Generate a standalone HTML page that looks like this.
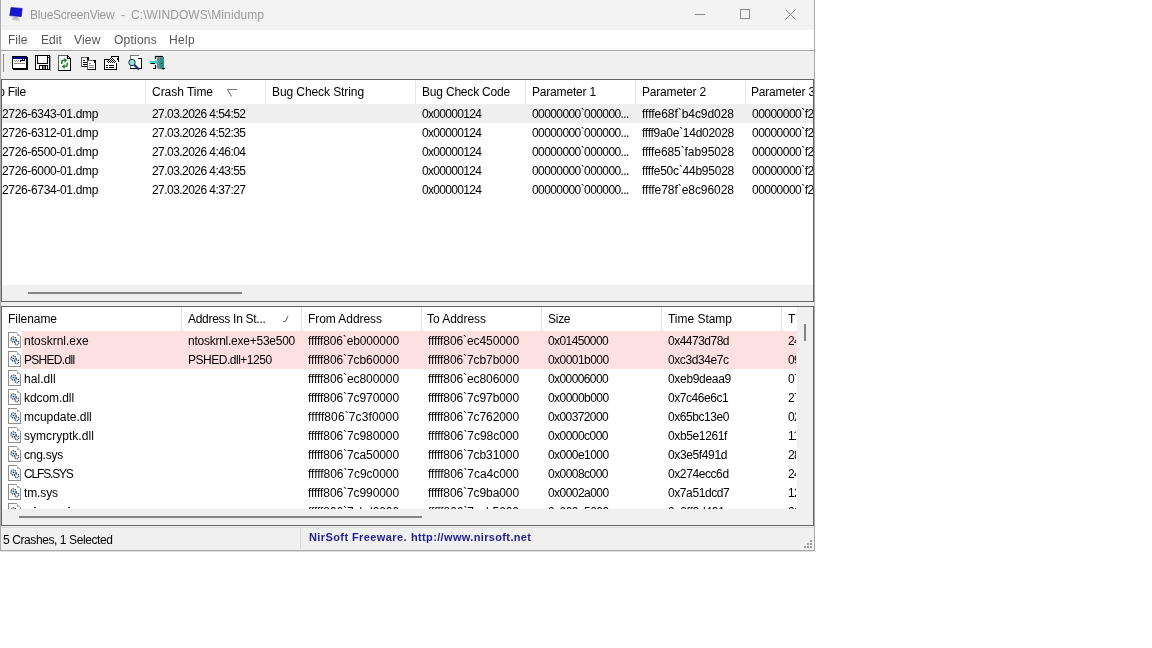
<!DOCTYPE html>
<html><head><meta charset="utf-8">
<style>
html,body{margin:0;padding:0;background:#fff;width:1152px;height:648px;overflow:hidden;position:relative}
*{box-sizing:border-box}
.a{position:absolute}
.t{position:absolute;white-space:pre;will-change:transform;font-family:"Liberation Sans",sans-serif;font-size:12px;line-height:14px;color:#000}
.clip{position:absolute;left:0;top:0;width:1152px;height:648px}
</style></head><body>
<!-- window frame -->
<div class="a" style="left:0;top:0;width:815px;height:551px;background:#f0f0f0;border-left:1px solid #aaa;border-right:1px solid #aaa;border-bottom:1px solid #aaa"></div>
<div class="a" style="left:0;top:551px;width:816px;height:1px;background:#dedede"></div>
<!-- title bar -->
<div class="a" style="left:1px;top:0;width:813px;height:30px;background:#f3f3f3"></div>
<div class="a" style="left:1px;top:25px;width:813px;height:2px;background:#f0f0f0"></div>
<!-- menu -->
<div class="a" style="left:1px;top:30px;width:813px;height:20px;background:#fff"></div>
<div class="a" style="left:1px;top:48px;width:813px;height:1px;background:#f4f4f4"></div>
<div class="a" style="left:1px;top:50px;width:813px;height:1px;background:#a0a0a0"></div>
<div class="a" style="left:1px;top:51px;width:813px;height:1px;background:#fafafa"></div>
<!-- toolbar separator -->
<div class="a" style="left:3px;top:54px;width:1px;height:18px;background:#8a8a8a"></div>
<!-- title buttons -->
<svg class="a" style="left:680px;top:0" width="130" height="30" viewBox="680 0 130 30">
<path d="M695 14.5H705" stroke="#8a8a8a" stroke-width="1" fill="none"/>
<rect x="740.5" y="9.5" width="9" height="9" stroke="#8a8a8a" stroke-width="1" fill="none"/>
<path d="M785.5 9.5L795.5 19.5M795.5 9.5L785.5 19.5" stroke="#8a8a8a" stroke-width="1" fill="none"/>
</svg>
<!-- title icon -->
<svg class="a" style="left:0;top:0" width="30" height="30" viewBox="0 0 30 30">
<path d="M11 7.6L22.2 8.4L21.2 16.6L9.8 15.6Z" fill="#1414d4" stroke="#10108a" stroke-width="0.7"/>
<path d="M12.5 17L18.5 17.5L20 20.5L12 20Z" fill="#c4c4d0"/>
<path d="M14 17.2L17 17.4" stroke="#8888a8" stroke-width="0.8"/>
</svg>

<!-- TOP LIST -->
<div class="a" style="left:1px;top:79px;width:813px;height:223px;border:1px solid #646464;background:#fff"></div>
<div class="a" style="left:2px;top:104px;width:811px;height:19px;background:#efefef"></div>
<div class="a" style="left:145px;top:80px;width:1px;height:24px;background:#e5e5e5"></div>
<div class="a" style="left:265px;top:80px;width:1px;height:24px;background:#e5e5e5"></div>
<div class="a" style="left:415px;top:80px;width:1px;height:24px;background:#e5e5e5"></div>
<div class="a" style="left:525px;top:80px;width:1px;height:24px;background:#e5e5e5"></div>
<div class="a" style="left:635px;top:80px;width:1px;height:24px;background:#e5e5e5"></div>
<div class="a" style="left:745px;top:80px;width:1px;height:24px;background:#e5e5e5"></div>
<svg class="a" style="left:226px;top:87px" width="12" height="11" viewBox="0 0 12 11"><path d="M1.2 2.5H11M1.8 3L5.5 9.5" stroke="#777" stroke-width="1.1" fill="none"/></svg>
<div class="clip" style="clip-path:inset(80px 339px 363px 2px)">
<span class="t" style="left:-25.65px;top:85px;letter-spacing:-0.326px">Dump File</span>
<span class="t" style="left:151.90px;top:85px;letter-spacing:-0.036px">Crash Time</span>
<span class="t" style="left:271.80px;top:85px;letter-spacing:-0.087px">Bug Check String</span>
<span class="t" style="left:421.80px;top:85px;letter-spacing:-0.195px">Bug Check Code</span>
<span class="t" style="left:531.60px;top:85px;letter-spacing:-0.185px">Parameter 1</span>
<span class="t" style="left:641.50px;top:85px;letter-spacing:-0.185px">Parameter 2</span>
<span class="t" style="left:751.40px;top:85px;letter-spacing:-0.185px">Parameter 3</span>
<span class="t" style="left:1.60px;top:107px;letter-spacing:-0.339px">2726-6343-01.dmp</span>
<span class="t" style="left:151.90px;top:107px;letter-spacing:-0.552px">27.03.2026 4:54:52</span>
<span class="t" style="left:421.80px;top:107px;letter-spacing:-0.678px">0x00000124</span>
<span class="t" style="left:531.60px;top:107px;letter-spacing:-0.591px">00000000`000000...</span>
<span class="t" style="left:641.60px;top:107px;letter-spacing:-0.045px">ffffe68f`b4c9d028</span>
<span class="t" style="left:751.60px;top:107px;letter-spacing:-0.518px">00000000`f2cd0000</span>
<span class="t" style="left:1.60px;top:126px;letter-spacing:-0.339px">2726-6312-01.dmp</span>
<span class="t" style="left:151.90px;top:126px;letter-spacing:-0.552px">27.03.2026 4:52:35</span>
<span class="t" style="left:421.80px;top:126px;letter-spacing:-0.678px">0x00000124</span>
<span class="t" style="left:531.60px;top:126px;letter-spacing:-0.591px">00000000`000000...</span>
<span class="t" style="left:641.60px;top:126px;letter-spacing:-0.281px">ffff9a0e`14d02028</span>
<span class="t" style="left:751.60px;top:126px;letter-spacing:-0.518px">00000000`f2cd0000</span>
<span class="t" style="left:1.60px;top:145px;letter-spacing:-0.339px">2726-6500-01.dmp</span>
<span class="t" style="left:151.90px;top:145px;letter-spacing:-0.552px">27.03.2026 4:46:04</span>
<span class="t" style="left:421.80px;top:145px;letter-spacing:-0.678px">0x00000124</span>
<span class="t" style="left:531.60px;top:145px;letter-spacing:-0.591px">00000000`000000...</span>
<span class="t" style="left:641.60px;top:145px;letter-spacing:-0.085px">ffffe685`fab95028</span>
<span class="t" style="left:751.60px;top:145px;letter-spacing:-0.518px">00000000`f2cd0000</span>
<span class="t" style="left:1.60px;top:164px;letter-spacing:-0.339px">2726-6000-01.dmp</span>
<span class="t" style="left:151.90px;top:164px;letter-spacing:-0.552px">27.03.2026 4:43:55</span>
<span class="t" style="left:421.80px;top:164px;letter-spacing:-0.678px">0x00000124</span>
<span class="t" style="left:531.60px;top:164px;letter-spacing:-0.591px">00000000`000000...</span>
<span class="t" style="left:641.60px;top:164px;letter-spacing:-0.241px">ffffe50c`44b95028</span>
<span class="t" style="left:751.60px;top:164px;letter-spacing:-0.518px">00000000`f2cd0000</span>
<span class="t" style="left:1.60px;top:183px;letter-spacing:-0.339px">2726-6734-01.dmp</span>
<span class="t" style="left:151.90px;top:183px;letter-spacing:-0.552px">27.03.2026 4:37:27</span>
<span class="t" style="left:421.80px;top:183px;letter-spacing:-0.678px">0x00000124</span>
<span class="t" style="left:531.60px;top:183px;letter-spacing:-0.591px">00000000`000000...</span>
<span class="t" style="left:641.60px;top:183px;letter-spacing:-0.045px">ffffe78f`e8c96028</span>
<span class="t" style="left:751.60px;top:183px;letter-spacing:-0.518px">00000000`f2cd0000</span>
</div>
<div class="a" style="left:2px;top:285px;width:811px;height:16px;background:#f0f0f0"></div>
<div class="a" style="left:28px;top:292px;width:214px;height:2px;background:#858585"></div>

<!-- BOTTOM LIST -->
<div class="a" style="left:1px;top:306px;width:813px;height:220px;border:1px solid #646464;background:#fff"></div>
<div class="a" style="left:22px;top:331px;width:775px;height:38px;background:#fde0e0"></div>
<div class="a" style="left:181px;top:307px;width:1px;height:24px;background:#e5e5e5"></div>
<div class="a" style="left:301px;top:307px;width:1px;height:24px;background:#e5e5e5"></div>
<div class="a" style="left:421px;top:307px;width:1px;height:24px;background:#e5e5e5"></div>
<div class="a" style="left:541px;top:307px;width:1px;height:24px;background:#e5e5e5"></div>
<div class="a" style="left:661px;top:307px;width:1px;height:24px;background:#e5e5e5"></div>
<div class="a" style="left:781px;top:307px;width:1px;height:24px;background:#e5e5e5"></div>
<svg class="a" style="left:281px;top:313px" width="10" height="10" viewBox="0 0 10 10"><path d="M2 8.5H4.5L7 3" stroke="#777" stroke-width="1.1" fill="none"/></svg>
<div class="clip" style="clip-path:inset(307px 356px 139px 2px)">
<svg class="a" style="left:8px;top:332px" width="14" height="17" viewBox="0 0 14 17"><g shape-rendering="crispEdges"><path d="M0 0H9V1H0ZM0 0H1V16H0ZM0 15H13V16H0ZM12 4H13V16H12Z" fill="#8f8f8f"/><rect x="1" y="1" width="8" height="14" fill="#fff"/><rect x="9" y="4" width="3" height="11" fill="#fff"/><path d="M9 1H10V2H11V3H12V4H9Z" fill="#b5b5b5"/></g>
<circle cx="5.5" cy="7.5" r="2.6" fill="#d6e6f2" stroke="#2c3a4c" stroke-width="1.2" stroke-dasharray="1.3 0.9"/>
<circle cx="5.5" cy="7.5" r="0.8" fill="#2c3a4c"/>
<circle cx="8.8" cy="10.8" r="2" fill="#e6f0f6" stroke="#2c3a4c" stroke-width="1.2" stroke-dasharray="1.1 0.8"/>
</svg><svg class="a" style="left:8px;top:351px" width="14" height="17" viewBox="0 0 14 17"><g shape-rendering="crispEdges"><path d="M0 0H9V1H0ZM0 0H1V16H0ZM0 15H13V16H0ZM12 4H13V16H12Z" fill="#8f8f8f"/><rect x="1" y="1" width="8" height="14" fill="#fff"/><rect x="9" y="4" width="3" height="11" fill="#fff"/><path d="M9 1H10V2H11V3H12V4H9Z" fill="#b5b5b5"/></g>
<circle cx="5.5" cy="7.5" r="2.6" fill="#d6e6f2" stroke="#2c3a4c" stroke-width="1.2" stroke-dasharray="1.3 0.9"/>
<circle cx="5.5" cy="7.5" r="0.8" fill="#2c3a4c"/>
<circle cx="8.8" cy="10.8" r="2" fill="#e6f0f6" stroke="#2c3a4c" stroke-width="1.2" stroke-dasharray="1.1 0.8"/>
</svg><svg class="a" style="left:8px;top:370px" width="14" height="17" viewBox="0 0 14 17"><g shape-rendering="crispEdges"><path d="M0 0H9V1H0ZM0 0H1V16H0ZM0 15H13V16H0ZM12 4H13V16H12Z" fill="#8f8f8f"/><rect x="1" y="1" width="8" height="14" fill="#fff"/><rect x="9" y="4" width="3" height="11" fill="#fff"/><path d="M9 1H10V2H11V3H12V4H9Z" fill="#b5b5b5"/></g>
<circle cx="5.5" cy="7.5" r="2.6" fill="#d6e6f2" stroke="#2c3a4c" stroke-width="1.2" stroke-dasharray="1.3 0.9"/>
<circle cx="5.5" cy="7.5" r="0.8" fill="#2c3a4c"/>
<circle cx="8.8" cy="10.8" r="2" fill="#e6f0f6" stroke="#2c3a4c" stroke-width="1.2" stroke-dasharray="1.1 0.8"/>
</svg><svg class="a" style="left:8px;top:389px" width="14" height="17" viewBox="0 0 14 17"><g shape-rendering="crispEdges"><path d="M0 0H9V1H0ZM0 0H1V16H0ZM0 15H13V16H0ZM12 4H13V16H12Z" fill="#8f8f8f"/><rect x="1" y="1" width="8" height="14" fill="#fff"/><rect x="9" y="4" width="3" height="11" fill="#fff"/><path d="M9 1H10V2H11V3H12V4H9Z" fill="#b5b5b5"/></g>
<circle cx="5.5" cy="7.5" r="2.6" fill="#d6e6f2" stroke="#2c3a4c" stroke-width="1.2" stroke-dasharray="1.3 0.9"/>
<circle cx="5.5" cy="7.5" r="0.8" fill="#2c3a4c"/>
<circle cx="8.8" cy="10.8" r="2" fill="#e6f0f6" stroke="#2c3a4c" stroke-width="1.2" stroke-dasharray="1.1 0.8"/>
</svg><svg class="a" style="left:8px;top:408px" width="14" height="17" viewBox="0 0 14 17"><g shape-rendering="crispEdges"><path d="M0 0H9V1H0ZM0 0H1V16H0ZM0 15H13V16H0ZM12 4H13V16H12Z" fill="#8f8f8f"/><rect x="1" y="1" width="8" height="14" fill="#fff"/><rect x="9" y="4" width="3" height="11" fill="#fff"/><path d="M9 1H10V2H11V3H12V4H9Z" fill="#b5b5b5"/></g>
<circle cx="5.5" cy="7.5" r="2.6" fill="#d6e6f2" stroke="#2c3a4c" stroke-width="1.2" stroke-dasharray="1.3 0.9"/>
<circle cx="5.5" cy="7.5" r="0.8" fill="#2c3a4c"/>
<circle cx="8.8" cy="10.8" r="2" fill="#e6f0f6" stroke="#2c3a4c" stroke-width="1.2" stroke-dasharray="1.1 0.8"/>
</svg><svg class="a" style="left:8px;top:427px" width="14" height="17" viewBox="0 0 14 17"><g shape-rendering="crispEdges"><path d="M0 0H9V1H0ZM0 0H1V16H0ZM0 15H13V16H0ZM12 4H13V16H12Z" fill="#8f8f8f"/><rect x="1" y="1" width="8" height="14" fill="#fff"/><rect x="9" y="4" width="3" height="11" fill="#fff"/><path d="M9 1H10V2H11V3H12V4H9Z" fill="#b5b5b5"/></g>
<circle cx="5.5" cy="7.5" r="2.6" fill="#d6e6f2" stroke="#2c3a4c" stroke-width="1.2" stroke-dasharray="1.3 0.9"/>
<circle cx="5.5" cy="7.5" r="0.8" fill="#2c3a4c"/>
<circle cx="8.8" cy="10.8" r="2" fill="#e6f0f6" stroke="#2c3a4c" stroke-width="1.2" stroke-dasharray="1.1 0.8"/>
</svg><svg class="a" style="left:8px;top:446px" width="14" height="17" viewBox="0 0 14 17"><g shape-rendering="crispEdges"><path d="M0 0H9V1H0ZM0 0H1V16H0ZM0 15H13V16H0ZM12 4H13V16H12Z" fill="#8f8f8f"/><rect x="1" y="1" width="8" height="14" fill="#fff"/><rect x="9" y="4" width="3" height="11" fill="#fff"/><path d="M9 1H10V2H11V3H12V4H9Z" fill="#b5b5b5"/></g>
<circle cx="5.5" cy="7.5" r="2.6" fill="#d6e6f2" stroke="#2c3a4c" stroke-width="1.2" stroke-dasharray="1.3 0.9"/>
<circle cx="5.5" cy="7.5" r="0.8" fill="#2c3a4c"/>
<circle cx="8.8" cy="10.8" r="2" fill="#e6f0f6" stroke="#2c3a4c" stroke-width="1.2" stroke-dasharray="1.1 0.8"/>
</svg><svg class="a" style="left:8px;top:465px" width="14" height="17" viewBox="0 0 14 17"><g shape-rendering="crispEdges"><path d="M0 0H9V1H0ZM0 0H1V16H0ZM0 15H13V16H0ZM12 4H13V16H12Z" fill="#8f8f8f"/><rect x="1" y="1" width="8" height="14" fill="#fff"/><rect x="9" y="4" width="3" height="11" fill="#fff"/><path d="M9 1H10V2H11V3H12V4H9Z" fill="#b5b5b5"/></g>
<circle cx="5.5" cy="7.5" r="2.6" fill="#d6e6f2" stroke="#2c3a4c" stroke-width="1.2" stroke-dasharray="1.3 0.9"/>
<circle cx="5.5" cy="7.5" r="0.8" fill="#2c3a4c"/>
<circle cx="8.8" cy="10.8" r="2" fill="#e6f0f6" stroke="#2c3a4c" stroke-width="1.2" stroke-dasharray="1.1 0.8"/>
</svg><svg class="a" style="left:8px;top:484px" width="14" height="17" viewBox="0 0 14 17"><g shape-rendering="crispEdges"><path d="M0 0H9V1H0ZM0 0H1V16H0ZM0 15H13V16H0ZM12 4H13V16H12Z" fill="#8f8f8f"/><rect x="1" y="1" width="8" height="14" fill="#fff"/><rect x="9" y="4" width="3" height="11" fill="#fff"/><path d="M9 1H10V2H11V3H12V4H9Z" fill="#b5b5b5"/></g>
<circle cx="5.5" cy="7.5" r="2.6" fill="#d6e6f2" stroke="#2c3a4c" stroke-width="1.2" stroke-dasharray="1.3 0.9"/>
<circle cx="5.5" cy="7.5" r="0.8" fill="#2c3a4c"/>
<circle cx="8.8" cy="10.8" r="2" fill="#e6f0f6" stroke="#2c3a4c" stroke-width="1.2" stroke-dasharray="1.1 0.8"/>
</svg><svg class="a" style="left:8px;top:503px" width="14" height="17" viewBox="0 0 14 17"><g shape-rendering="crispEdges"><path d="M0 0H9V1H0ZM0 0H1V16H0ZM0 15H13V16H0ZM12 4H13V16H12Z" fill="#8f8f8f"/><rect x="1" y="1" width="8" height="14" fill="#fff"/><rect x="9" y="4" width="3" height="11" fill="#fff"/><path d="M9 1H10V2H11V3H12V4H9Z" fill="#b5b5b5"/></g>
<circle cx="5.5" cy="7.5" r="2.6" fill="#d6e6f2" stroke="#2c3a4c" stroke-width="1.2" stroke-dasharray="1.3 0.9"/>
<circle cx="5.5" cy="7.5" r="0.8" fill="#2c3a4c"/>
<circle cx="8.8" cy="10.8" r="2" fill="#e6f0f6" stroke="#2c3a4c" stroke-width="1.2" stroke-dasharray="1.1 0.8"/>
</svg>
<span class="t" style="left:7.80px;top:312px;letter-spacing:-0.045px">Filename</span>
<span class="t" style="left:188.30px;top:312px;letter-spacing:-0.284px">Address In St...</span>
<span class="t" style="left:307.80px;top:312px;letter-spacing:-0.059px">From Address</span>
<span class="t" style="left:427.30px;top:312px;letter-spacing:-0.037px">To Address</span>
<span class="t" style="left:547.90px;top:312px;letter-spacing:-0.265px">Size</span>
<span class="t" style="left:667.80px;top:312px;letter-spacing:-0.025px">Time Stamp</span>
<span class="t" style="left:788.30px;top:312px;letter-spacing:-1.182px">T</span>
<span class="t" style="left:24.00px;top:334px;letter-spacing:0.001px">ntoskrnl.exe</span>
<span class="t" style="left:188.30px;top:334px;letter-spacing:-0.250px">ntoskrnl.exe+53e500</span>
<span class="t" style="left:307.80px;top:334px;letter-spacing:-0.131px">fffff806`eb000000</span>
<span class="t" style="left:427.80px;top:334px;letter-spacing:-0.091px">fffff806`ec450000</span>
<span class="t" style="left:547.90px;top:334px;letter-spacing:-0.596px">0x01450000</span>
<span class="t" style="left:667.80px;top:334px;letter-spacing:-0.503px">0x4473d78d</span>
<span class="t" style="left:787.80px;top:334px;letter-spacing:-0.650px">24.05.2006</span>
<span class="t" style="left:24.00px;top:353px;letter-spacing:-0.704px">PSHED.dll</span>
<span class="t" style="left:188.30px;top:353px;letter-spacing:-0.485px">PSHED.dll+1250</span>
<span class="t" style="left:307.80px;top:353px;letter-spacing:-0.091px">fffff806`7cb60000</span>
<span class="t" style="left:427.80px;top:353px;letter-spacing:-0.091px">fffff806`7cb7b000</span>
<span class="t" style="left:547.90px;top:353px;letter-spacing:-0.550px">0x0001b000</span>
<span class="t" style="left:667.80px;top:353px;letter-spacing:-0.406px">0xc3d34e7c</span>
<span class="t" style="left:787.80px;top:353px;letter-spacing:-0.650px">09.01.2074</span>
<span class="t" style="left:24.00px;top:372px;letter-spacing:0.064px">hal.dll</span>
<span class="t" style="left:307.80px;top:372px;letter-spacing:-0.091px">fffff806`ec800000</span>
<span class="t" style="left:427.80px;top:372px;letter-spacing:-0.091px">fffff806`ec806000</span>
<span class="t" style="left:547.90px;top:372px;letter-spacing:-0.596px">0x00006000</span>
<span class="t" style="left:667.80px;top:372px;letter-spacing:-0.319px">0xeb9deaa9</span>
<span class="t" style="left:787.80px;top:372px;letter-spacing:-0.650px">07.03.2095</span>
<span class="t" style="left:24.00px;top:391px;letter-spacing:-0.078px">kdcom.dll</span>
<span class="t" style="left:307.80px;top:391px;letter-spacing:-0.091px">fffff806`7c970000</span>
<span class="t" style="left:427.80px;top:391px;letter-spacing:-0.091px">fffff806`7c97b000</span>
<span class="t" style="left:547.90px;top:391px;letter-spacing:-0.550px">0x0000b000</span>
<span class="t" style="left:667.80px;top:391px;letter-spacing:-0.453px">0x7c46e6c1</span>
<span class="t" style="left:787.80px;top:391px;letter-spacing:-0.650px">27.02.2036</span>
<span class="t" style="left:24.00px;top:410px;letter-spacing:-0.033px">mcupdate.dll</span>
<span class="t" style="left:307.80px;top:410px;letter-spacing:0.106px">fffff806`7c3f0000</span>
<span class="t" style="left:427.80px;top:410px;letter-spacing:-0.091px">fffff806`7c762000</span>
<span class="t" style="left:547.90px;top:410px;letter-spacing:-0.596px">0x00372000</span>
<span class="t" style="left:667.80px;top:410px;letter-spacing:-0.454px">0x65bc13e0</span>
<span class="t" style="left:787.80px;top:410px;letter-spacing:-0.650px">02.02.2024</span>
<span class="t" style="left:24.00px;top:429px;letter-spacing:0.040px">symcryptk.dll</span>
<span class="t" style="left:307.80px;top:429px;letter-spacing:-0.091px">fffff806`7c980000</span>
<span class="t" style="left:427.80px;top:429px;letter-spacing:-0.051px">fffff806`7c98c000</span>
<span class="t" style="left:547.90px;top:429px;letter-spacing:-0.546px">0x0000c000</span>
<span class="t" style="left:667.80px;top:429px;letter-spacing:-0.369px">0xb5e1261f</span>
<span class="t" style="left:787.80px;top:429px;letter-spacing:-0.561px">11.08.2066</span>
<span class="t" style="left:24.00px;top:448px;letter-spacing:-0.242px">cng.sys</span>
<span class="t" style="left:307.80px;top:448px;letter-spacing:-0.091px">fffff806`7ca50000</span>
<span class="t" style="left:427.80px;top:448px;letter-spacing:-0.091px">fffff806`7cb31000</span>
<span class="t" style="left:547.90px;top:448px;letter-spacing:-0.550px">0x000e1000</span>
<span class="t" style="left:667.80px;top:448px;letter-spacing:-0.369px">0x3e5f491d</span>
<span class="t" style="left:787.80px;top:448px;letter-spacing:-0.650px">28.03.2003</span>
<span class="t" style="left:24.00px;top:467px;letter-spacing:-1.175px">CLFS.SYS</span>
<span class="t" style="left:307.80px;top:467px;letter-spacing:-0.051px">fffff806`7c9c0000</span>
<span class="t" style="left:427.80px;top:467px;letter-spacing:-0.051px">fffff806`7ca4c000</span>
<span class="t" style="left:547.90px;top:467px;letter-spacing:-0.546px">0x0008c000</span>
<span class="t" style="left:667.80px;top:467px;letter-spacing:-0.406px">0x274ecc6d</span>
<span class="t" style="left:787.80px;top:467px;letter-spacing:-0.650px">24.12.1990</span>
<span class="t" style="left:24.00px;top:486px;letter-spacing:-0.125px">tm.sys</span>
<span class="t" style="left:307.80px;top:486px;letter-spacing:-0.091px">fffff806`7c990000</span>
<span class="t" style="left:427.80px;top:486px;letter-spacing:-0.091px">fffff806`7c9ba000</span>
<span class="t" style="left:547.90px;top:486px;letter-spacing:-0.550px">0x0002a000</span>
<span class="t" style="left:667.80px;top:486px;letter-spacing:-0.408px">0x7a51dcd7</span>
<span class="t" style="left:787.80px;top:486px;letter-spacing:-0.650px">12.02.2035</span>
<span class="t" style="left:307.80px;top:505px;letter-spacing:-0.091px">fffff806`7cbd0000</span>
<span class="t" style="left:427.80px;top:505px;letter-spacing:-0.051px">fffff806`7ccb5000</span>
<span class="t" style="left:547.90px;top:505px;letter-spacing:-0.550px">0x000e5000</span>
<span class="t" style="left:667.80px;top:505px;letter-spacing:-0.259px">0x2ff2d491</span>
<span class="t" style="left:787.80px;top:505px;letter-spacing:-0.650px">01.07.1995</span>
<div class="a" style="left:34px;top:506.5px;width:1.5px;height:1.5px;background:#222"></div><div class="a" style="left:68px;top:506.5px;width:1.5px;height:1.5px;background:#222"></div>
</div>
<div class="a" style="left:797px;top:307px;width:16px;height:218px;background:#f0f0f0"></div>
<div class="a" style="left:804px;top:324px;width:2px;height:17px;background:#858585"></div>
<div class="a" style="left:2px;top:509px;width:811px;height:16px;background:#f0f0f0"></div>
<div class="a" style="left:19px;top:516px;width:403px;height:2px;background:#858585"></div>

<!-- STATUS -->
<div class="a" style="left:1px;top:527px;width:813px;height:1px;background:#d9d9d9"></div>
<div class="a" style="left:300px;top:527px;width:1px;height:22px;background:#d5d5d5"></div>
<svg class="a" style="left:800px;top:534px" width="14" height="14" viewBox="0 0 14 14" fill="#a0a0a0">
<rect x="10" y="6" width="2" height="2"/><rect x="7" y="9" width="2" height="2"/><rect x="10" y="9" width="2" height="2"/>
<rect x="4" y="12" width="2" height="2"/><rect x="7" y="12" width="2" height="2"/><rect x="10" y="12" width="2" height="2"/>
</svg>
<span class="t" style="left:309px;top:530px;font-size:11px;font-weight:bold;color:#1e1e90;letter-spacing:0.4px">NirSoft Freeware.</span><span class="t" style="left:411px;top:530px;font-size:11px;font-weight:bold;color:#1e1e90;letter-spacing:0.35px">http://www.nirsoft.net</span>
<svg class="a" style="left:0;top:50px" width="180" height="29" viewBox="0 50 180 29" shape-rendering="crispEdges">
<!-- icon1 window 12..28 x 56..70 -->
<rect x="12" y="56" width="15" height="13" fill="#000"/>
<rect x="13" y="57" width="13" height="11" fill="#fff"/>
<rect x="27" y="57" width="1" height="13" fill="#000"/>
<rect x="13" y="69" width="15" height="1" fill="#000"/>
<rect x="13" y="57" width="13" height="2" fill="#000080"/>
<rect x="22" y="59" width="1" height="1" fill="#000080"/><rect x="24" y="59" width="1" height="1" fill="#000080"/>
<rect x="14" y="60" width="1" height="1" fill="#777"/><rect x="16" y="60" width="1" height="1" fill="#777"/><rect x="18" y="60" width="1" height="1" fill="#777"/>
<rect x="15" y="61" width="1" height="1" fill="#999"/><rect x="17" y="61" width="1" height="1" fill="#999"/>
<rect x="20" y="60" width="5" height="1" fill="#000"/><rect x="20" y="61" width="1" height="1" fill="#000"/>
<rect x="14" y="63" width="11" height="1" fill="#8a8a8a"/>
<!-- icon2 floppy 35..50 x 55..70 -->
<rect x="35" y="55" width="15" height="15" fill="#000"/>
<rect x="36" y="56" width="1" height="13" fill="#fff"/>
<rect x="48" y="58" width="1" height="11" fill="#fff"/>
<rect x="48" y="56" width="1" height="1" fill="#fff"/>
<rect x="38" y="56" width="9" height="7" fill="#fff"/>
<rect x="37" y="64" width="11" height="1" fill="#fff"/>
<rect x="37" y="65" width="2" height="4" fill="#fff"/>
<rect x="40" y="66" width="2" height="3" fill="#fff"/>
<rect x="43" y="66" width="2" height="3" fill="#808080"/>
<rect x="46" y="66" width="1" height="3" fill="#fff"/>
<rect x="50" y="56" width="1" height="15" fill="#444" opacity="0.5"/>
<!-- icon3 refresh doc 58..71 x 55..71 -->
<path d="M58 55H67V56H58ZM58 55H59V71H58Z" fill="#606060"/>
<rect x="59" y="56" width="8" height="14" fill="#f4fff4"/>
<rect x="67" y="59" width="3" height="11" fill="#f4fff4"/>
<rect x="67" y="55" width="1" height="4" fill="#000"/><rect x="67" y="58" width="3" height="1" fill="#000"/>
<rect x="68" y="56" width="1" height="1" fill="#000"/><rect x="69" y="57" width="1" height="1" fill="#000"/>
<rect x="70" y="58" width="1" height="13" fill="#000"/>
<rect x="58" y="70" width="13" height="1" fill="#000"/>

<!-- icon4 copy -->
<rect x="81" y="57" width="8" height="10" fill="#000"/>
<rect x="82" y="57" width="5" height="9" fill="#fff"/>
<rect x="81" y="57" width="6" height="1" fill="#666"/><rect x="81" y="57" width="1" height="10" fill="#555"/>
<rect x="83" y="60" width="2" height="1" fill="#000"/><rect x="83" y="62" width="4" height="1" fill="#000"/><rect x="83" y="64" width="4" height="1" fill="#000"/>
<rect x="87" y="60" width="9" height="10" fill="#000"/>
<rect x="88" y="61" width="6" height="8" fill="#fff"/><rect x="94" y="63" width="1" height="6" fill="#fff"/>
<rect x="87" y="60" width="6" height="1" fill="#666"/><rect x="87" y="60" width="1" height="10" fill="#555"/>
<rect x="89" y="63" width="2" height="1" fill="#888"/><rect x="89" y="65" width="5" height="1" fill="#888"/><rect x="89" y="67" width="5" height="1" fill="#888"/>
<!-- icon5 properties -->
<defs><pattern id="chk" x="0" y="0" width="2" height="2" patternUnits="userSpaceOnUse"><rect width="2" height="2" fill="#fff"/><rect width="1" height="1" fill="#000"/><rect x="1" y="1" width="1" height="1" fill="#000"/></pattern></defs>
<rect x="104" y="59" width="13" height="11" fill="#000"/>
<rect x="105" y="60" width="11" height="9" fill="#fff"/>
<rect x="111" y="56" width="7" height="1" fill="#000"/>
<rect x="111" y="57" width="7" height="5" fill="#fff"/>
<rect x="118" y="56" width="1" height="6" fill="#000"/>
<rect x="117" y="58" width="1" height="2" fill="#000"/>
<path d="M106 61L107 60L108 61L110 57L111 57L116 62L116 63L113 63L112 64L111 63L109 62L108 63L107 63Z" fill="url(#chk)"/>
<rect x="116" y="62" width="1" height="1" fill="#fff"/>
<rect x="106" y="65" width="2" height="1" fill="#000"/><rect x="109" y="65" width="5" height="1" fill="#000"/>
<rect x="106" y="67" width="2" height="1" fill="#000"/><rect x="109" y="67" width="5" height="1" fill="#000"/>
<!-- icon6 find -->
<rect x="130" y="55" width="9" height="1" fill="#777"/><rect x="130" y="55" width="1" height="14" fill="#777"/>
<rect x="131" y="56" width="10" height="12" fill="#fff"/>
<rect x="138" y="58" width="3" height="1" fill="#000"/><rect x="141" y="58" width="1" height="11" fill="#000"/><rect x="130" y="68" width="12" height="1" fill="#000"/>
</svg>
<svg class="a" style="left:50px;top:50px" width="130" height="29" viewBox="50 50 130 29">
<path d="M61.8 64V62.2Q61.8 60.3 64 60.3H64.8" stroke="#2a7a3a" stroke-width="1.5" fill="none"/>
<path d="M64.3 57.8L67.3 60.3L64.3 62.8Z" fill="#2a7a3a"/>
<path d="M67.3 62.8V64.4Q67.3 66.4 65 66.4H64.2" stroke="#2a7a3a" stroke-width="1.5" fill="none"/>
<path d="M64.7 63.9L61.7 66.4L64.7 68.9Z" fill="#2a7a3a"/>
<circle cx="132" cy="62.5" r="3.2" fill="#90e8d8" stroke="#203040" stroke-width="1"/>
<path d="M134.5 65L139 69.5" stroke="#1a2a80" stroke-width="2.2"/>
<!-- exit -->
<path d="M155 56.5H163" stroke="#000" stroke-width="1.2"/>
<path d="M155.5 56V59M155.5 65V68.5H153" stroke="#000" stroke-width="1.2" fill="none"/>
<path d="M157 57.5L164 57V70L157 68Z" fill="#2a9088"/>
<path d="M157 58L160 57.5V69L157 68Z" fill="#6a8a90"/>
<path d="M150 61H155V59L158 62L155 65V63H150Z" fill="#30d8d0"/>
<path d="M150.5 63.5H155" stroke="#000" stroke-width="1"/>
<path d="M162 68.5H165" stroke="#000" stroke-width="1"/>
<rect x="161" y="63" width="1" height="1" fill="#000"/>
</svg>

<span class="t" style="left:30.30px;top:8px;letter-spacing:-0.239px;color:#999">BlueScreenView</span>
<span class="t" style="left:120.80px;top:8px;letter-spacing:-0.817px;color:#999">-</span>
<span class="t" style="left:131.30px;top:8px;letter-spacing:0.087px;color:#999">C:\WINDOWS\Minidump</span>
<span class="t" style="left:8.30px;top:33px;letter-spacing:0.039px;color:#555">File</span>
<span class="t" style="left:40.50px;top:33px;letter-spacing:0.078px;color:#555">Edit</span>
<span class="t" style="left:74.30px;top:33px;letter-spacing:0.176px;color:#555">View</span>
<span class="t" style="left:113.70px;top:33px;letter-spacing:0.234px;color:#555">Options</span>
<span class="t" style="left:169.30px;top:33px;letter-spacing:0.328px;color:#555">Help</span>
<span class="t" style="left:3.30px;top:533px;letter-spacing:-0.408px">5 Crashes, 1 Selected</span>
</body></html>
